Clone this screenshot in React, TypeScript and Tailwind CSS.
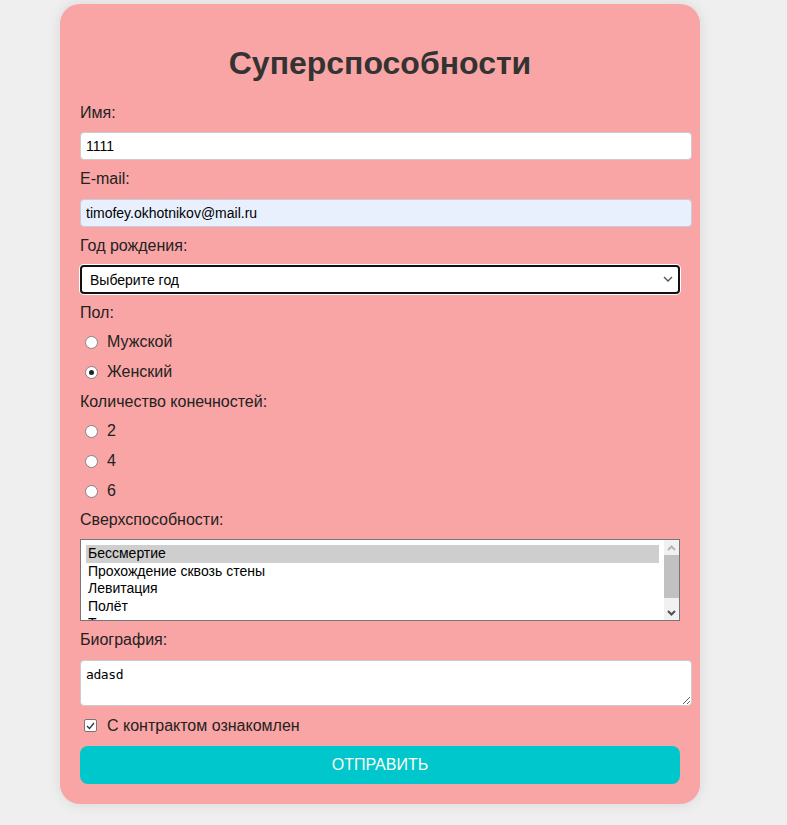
import { useState } from 'react';

const powers = ['Бессмертие', 'Прохождение сквозь стены', 'Левитация', 'Полёт', 'Телекинез'];

function Radio({ checked, label }: { checked?: boolean; label: string }) {
  return (
    <div className="flex h-[20px] items-center">
      <span className="ml-[5px] mr-[9px] flex h-[13px] w-[13px] items-center justify-center rounded-full border border-[#858585] bg-white">
        {checked && <span className="h-[5px] w-[5px] rounded-full bg-[#222]" />}
      </span>
      <span>{label}</span>
    </div>
  );
}

export default function App() {
  const [selected] = useState('Бессмертие');

  return (
    <div className="min-h-screen bg-[#efefef] pb-[22px] pt-[4px] font-['Liberation_Sans',Arial,sans-serif]">
      <form className="ml-[60px] w-[640px] rounded-[20px] bg-[#f9a5a5] p-[20px] shadow-[0_0_14px_rgba(0,0,0,0.10)]">
        <h1 className="mb-[22px] mt-[21px] text-center text-[32px] font-bold leading-[37px] text-[#333]">
          Суперспособности
        </h1>

        <div className="flex flex-col gap-[10px] text-[16px] leading-[18.4px] text-[#222]">
          <label>Имя:</label>
          <input
            readOnly
            value="1111"
            className="h-[28px] w-[612px] rounded-[4px] border border-[#cccccc] bg-white px-[5px] text-[14px] text-black outline-none"
          />

          <label>E-mail:</label>
          <input
            readOnly
            value="timofey.okhotnikov@mail.ru"
            className="h-[28px] w-[612px] rounded-[4px] border border-[#c9ccd3] bg-[#e8f0fe] px-[5px] text-[14px] text-black outline-none"
          />

          <label>Год рождения:</label>
          <div className="relative w-[600px]">
            <select className="h-[29px] w-[600px] appearance-none rounded-[4px] border-2 border-[#111] bg-white pl-[8px] text-[14px] text-black shadow-[0_0_0_1px_#ffffff] outline-none">
              <option>Выберите год</option>
            </select>
            <svg className="pointer-events-none absolute right-[7px] top-[11px]" width="10" height="7" viewBox="0 0 10 7">
              <polyline points="1,1 5,5 9,1" fill="none" stroke="#555" strokeWidth="1.4" />
            </svg>
          </div>

          <label>Пол:</label>
          <Radio label="Мужской" />
          <Radio label="Женский" checked />

          <label>Количество конечностей:</label>
          <Radio label="2" />
          <Radio label="4" />
          <Radio label="6" />

          <label>Сверхспособности:</label>
          <div className="flex h-[82px] w-[600px] overflow-hidden border border-[#767676] bg-white">
            <div className="flex-1 overflow-hidden p-[5px] text-[14px] leading-[17.5px] text-black">
              {powers.map((p) => (
                <div key={p} className={`px-[2px] ${p === selected ? 'bg-[#cecece]' : ''}`}>
                  {p}
                </div>
              ))}
            </div>
            <div className="flex w-[15px] flex-col bg-[#f1f1f1]">
              <div className="flex h-[15px] items-center justify-center">
                <svg width="9" height="6" viewBox="0 0 9 6">
                  <polyline points="1,5 4.5,1.5 8,5" fill="none" stroke="#b5b5b5" strokeWidth="2" />
                </svg>
              </div>
              <div className="h-[43px] bg-[#c1c1c1]" />
              <div className="flex-1" />
              <div className="flex h-[15px] items-center justify-center">
                <svg width="9" height="6" viewBox="0 0 9 6">
                  <polyline points="1,1 4.5,4.5 8,1" fill="none" stroke="#505050" strokeWidth="2" />
                </svg>
              </div>
            </div>
          </div>

          <label>Биография:</label>
          <textarea
            readOnly
            defaultValue="adasd"
            className="h-[46px] w-[612px] rounded-[4px] border border-[#cccccc] bg-white px-[5px] pt-[6px] font-['DejaVu_Sans_Mono',monospace] text-[13px] leading-[16px] tracking-[-0.4px] text-black outline-none"
          />

          <div className="flex h-[20px] items-center">
            <span className="ml-[4px] mr-[10px] flex h-[13px] w-[13px] items-center justify-center rounded-[2px] border border-[#767676] bg-white">
              <svg width="9" height="8" viewBox="0 0 9 8">
                <polyline points="1,4 3.5,6.5 8,1" fill="none" stroke="#333" strokeWidth="1.3" />
              </svg>
            </span>
            <span>С контрактом ознакомлен</span>
          </div>

          <button
            type="button"
            className="h-[38px] w-[600px] rounded-[8px] bg-[#00c7cc] text-[16px] text-[#fffdf5]"
          >
            ОТПРАВИТЬ
          </button>
        </div>
      </form>
    </div>
  );
}
